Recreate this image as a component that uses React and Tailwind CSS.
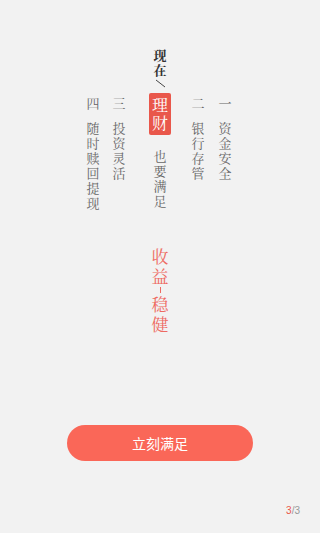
const font = {
  fontFamily: '"Noto Serif CJK SC", "Noto Sans CJK SC", serif',
};

function Col({ head, chars, className = "" }) {
  return (
    <div className={`flex w-[14px] flex-col items-center text-[13px] text-[#666] ${className}`}>
      <span className="mb-[10px] leading-[15px]">{head}</span>
      {chars.split("").map((c, i) => (
        <span key={i} className="leading-[15px]">
          {c}
        </span>
      ))}
    </div>
  );
}

export default function App() {
  return (
    <div
      className="relative flex h-[533px] w-[320px] flex-col overflow-hidden bg-[#f2f2f2]"
      style={font}
    >
      {/* vertical copy */}
      <div className="flex items-start pl-[86px] pt-[47px]">
        <Col head="四" chars="随时赎回提现" className="mt-[48px]" />
        <Col head="三" chars="投资灵活" className="ml-[12px] mt-[48px]" />

        {/* center column */}
        <div className="ml-[23px] flex w-[22px] flex-col items-center text-[13px]">
          <span className="font-bold leading-[15px] text-[#333]">现</span>
          <span className="font-bold leading-[15px] text-[#333]">在</span>
          <svg width="12" height="10" viewBox="0 0 12 10" className="mt-[2px]">
            <line x1="2" y1="1" x2="11" y2="8" stroke="#444" strokeWidth="1" />
          </svg>
          <div className="mt-[4px] flex h-[42px] w-[22px] flex-col items-center justify-center rounded-[2px] bg-[#e9574b] text-[16px] leading-[18px] text-white">
            <span>理</span>
            <span>财</span>
          </div>
          <div className="mt-[13px] flex flex-col items-center text-[#666]">
            {"也要满足".split("").map((c, i) => (
              <span key={i} className="leading-[15px]">
                {c}
              </span>
            ))}
          </div>
        </div>

        <Col head="二" chars="银行存管" className="ml-[20px] mt-[48px]" />
        <Col head="一" chars="资金安全" className="ml-[13px] mt-[48px]" />
      </div>

      {/* slogan */}
      <div className="mt-[36px] flex flex-col items-center text-[17px] leading-[20px] text-[#ee6a62]">
        <span>收</span>
        <span>益</span>
        <span className="my-[1px] h-[6px] w-[1px] bg-[#ee6a62]" />
        <span>稳</span>
        <span>健</span>
      </div>

      {/* button */}
      <div className="mt-auto mb-[72px] flex justify-center">
        <button
          className="h-[36px] w-[186px] rounded-full bg-[#fa6758] text-[14px] text-white"
          style={{ fontFamily: '"Noto Sans CJK SC", sans-serif' }}
        >
          立刻满足
        </button>
      </div>

      <div
        className="absolute bottom-[17px] right-[20px] text-[10px] leading-none"
        style={{ fontFamily: '"Liberation Sans", sans-serif' }}
      >
        <span className="text-[#e9574b]">3</span>
        <span className="text-[#999]">/3</span>
      </div>
    </div>
  );
}
